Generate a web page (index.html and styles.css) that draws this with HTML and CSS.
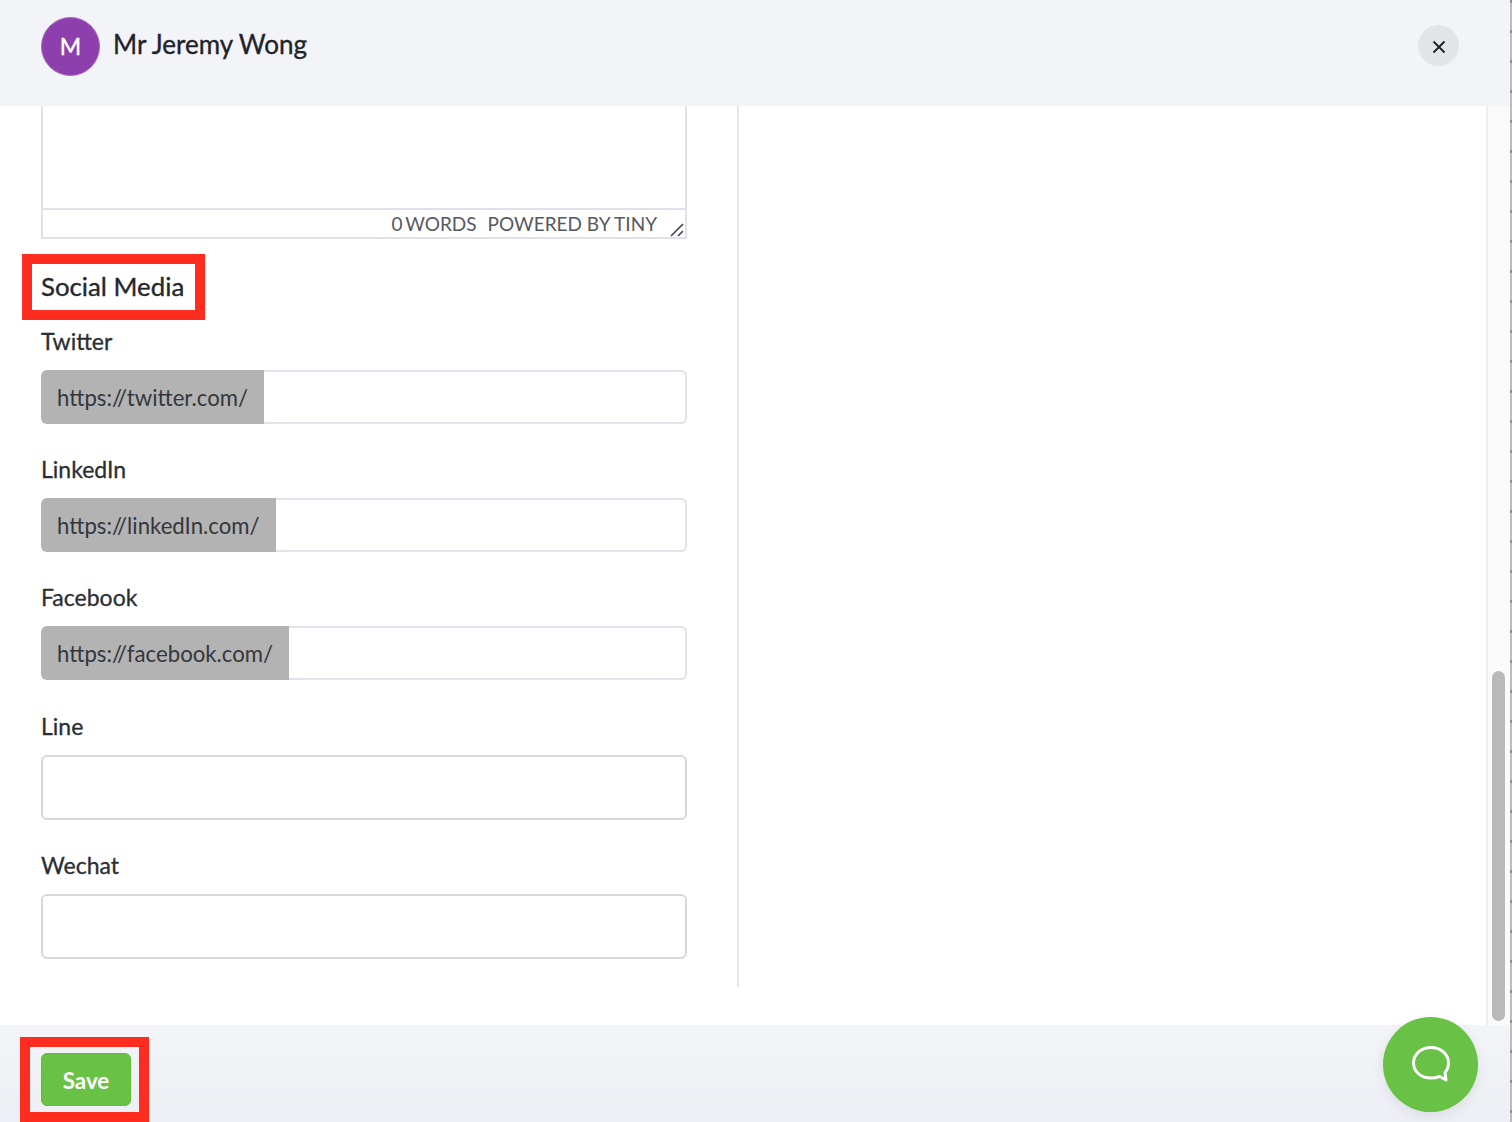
FILE: index.html
```html
<!DOCTYPE html>
<html lang="en">
<head>
<meta charset="utf-8">
<title>Mr Jeremy Wong</title>
<link rel="stylesheet" href="styles.css">
</head>
<body>
<div class="modal">
  <header class="head">
    <div class="who">
      <div class="avatar">M</div>
      <div class="name">Mr Jeremy Wong</div>
    </div>
    <button class="close" aria-label="Close">
      <svg width="14" height="14" viewBox="0 0 14 14"><path d="M1.5 1.5 L12.5 12.5 M12.5 1.5 L1.5 12.5" stroke="#1c1f26" stroke-width="1.8" fill="none"/></svg>
    </button>
  </header>
  <main class="body">
    <div class="col">
      <div class="editor">
        <div class="edit-area"></div>
        <div class="status">
          <span class="words">0 WORDS</span><span class="powered">POWERED BY TINY</span>
          <svg class="grip" width="14" height="14" viewBox="0 0 14 14"><path d="M1 13 L13 1 M8 13 L13 8" stroke="#444" stroke-width="1.6" fill="none"/></svg>
        </div>
      </div>
      <h2 class="section">Social Media</h2>
      <label class="lab first">Twitter</label>
      <div class="group"><span class="prefix">https://twitter.com/</span><input class="ginput"></div>
      <label class="lab">LinkedIn</label>
      <div class="group"><span class="prefix">https://linkedIn.com/</span><input class="ginput"></div>
      <label class="lab">Facebook</label>
      <div class="group"><span class="prefix">https://facebook.com/</span><input class="ginput"></div>
      <label class="lab lab-l">Line</label>
      <input class="plain">
      <label class="lab">Wechat</label>
      <input class="plain">
    </div>
    <div class="scroll"><div class="thumb"></div></div>
  </main>
  <footer class="foot">
    <button class="save">Save</button>
  </footer>
</div>
<div class="chat">
  <svg width="44" height="44" viewBox="0 0 44 44"><path d="M22 4.5 C12.3 4.5 4.5 11.2 4.5 20 C4.5 28.8 12.3 35 22 35 C25 35 28 34.5 30.5 33.3 L37 37 L36 29.5 C38.2 27 39.5 23.8 39.5 20 C39.5 11.2 31.7 4.5 22 4.5 Z" fill="none" stroke="#fff" stroke-width="3" stroke-linejoin="round"/></svg>
</div>
<div class="mark mark-a"></div>
<div class="mark mark-b"></div>
</body>
</html>
```
FILE: styles.css
```css
* { box-sizing: border-box; }
html, body { margin: 0; height: 1122px; overflow: hidden; font-family: Lato, "Liberation Sans", sans-serif; color: #2b2f33; }
body { background: repeating-linear-gradient(#8f8f8f 0, #8f8f8f 3px, #bdbdbd 3px, #bdbdbd 30px); }
.modal { display: flex; flex-direction: column; width: 1510px; height: 1122px; background: #fff; }
.head { height: 106px; flex: none; background: #f2f4f8; display: flex; justify-content: space-between; padding: 17px 51px 0 41px; }
.who { display: flex; align-items: flex-start; gap: 13px; }
.avatar { width: 59px; height: 59px; border-radius: 50%; background: #8e3fae; border: 1px solid #a465c0; color: #fff; font-size: 23px; padding-bottom: 1px; -webkit-text-stroke: 0.4px #fff; display: flex; align-items: center; justify-content: center; }
.name { font-size: 26px; line-height: 30px; margin-top: 12px; color: #1f232a; -webkit-text-stroke: 0.35px #1f232a; }
.close { margin-top: 8px; width: 41px; height: 41px; border-radius: 50%; background: #e3e4e6; border: 0; padding: 2px 0 0; display: flex; align-items: center; justify-content: center; }
.body { flex: 1; min-height: 0; display: flex; justify-content: space-between; }
.col { width: 739px; height: 881px; padding: 0 51px 0 41px; border-right: 2px solid #e4e6ea; }
.editor { width: 646px; height: 133px; border: 2px solid #dfe2ea; border-top: 0; display: flex; flex-direction: column; }
.edit-area { flex: 1; }
.status { height: 29px; border-top: 2px solid #dfe2ea; display: flex; justify-content: flex-end; align-items: center; padding-right: 28px; font-size: 19px; color: #55595e; position: relative; }
.words { word-spacing: -2px; }
.powered { margin-left: 11px; }
.grip { position: absolute; right: 1px; bottom: 0; }
.section { margin: 31px 0 0; font-size: 25.8px; line-height: 32px; font-weight: 400; color: #24282c; -webkit-text-stroke: 0.35px #24282c; }
.lab { display: block; font-size: 23px; line-height: 27px; margin-top: 32px; color: #2b2f33; -webkit-text-stroke: 0.3px #2b2f33; }
.lab.first { margin-top: 26px; }
.lab-l { margin-top: 33px; }
.group { margin-top: 15px; height: 54px; width: 646px; display: flex; }
.prefix { background: #b3b3b3; border-radius: 6px 0 0 6px; padding: 0 16px; font-size: 22.2px; display: flex; align-items: center; color: #33373b; white-space: nowrap; }
.ginput { flex: 1; min-width: 0; border: 2px solid #e0e3ea; border-left: 0; border-radius: 0 6px 6px 0; background: #fff; }
.plain { display: block; margin-top: 15px; width: 646px; height: 65px; border: 2px solid #d6d8dc; border-radius: 6px; background: #fff; }
.scroll { width: 24px; height: 919px; border-left: 2px solid #eceef1; background: #fafafa; padding: 565px 0 0 4px; }
.thumb { width: 13px; height: 350px; border-radius: 7px; background: #b9b9b9; }
.foot { height: 97px; flex: none; background: linear-gradient(#f2f4f8, #eeeff4); padding: 28px 0 0 41px; }
.save { width: 90px; height: 53px; border: 1px solid #5fbd38; border-radius: 6px; background: #69c145; color: #fff; padding: 2px 0 0; font: 700 22.4px Lato, "Liberation Sans", sans-serif; }
.chat { position: absolute; left: 1383px; top: 1017px; width: 95px; height: 95px; border-radius: 50%; background: #69c145; box-shadow: 0 4px 14px rgba(0,0,0,.08); display: flex; align-items: center; justify-content: center; }
.mark { position: absolute; border: 10px solid #ff2d1f; }
.mark-a { left: 22px; top: 254px; width: 183px; height: 66px; }
.mark-b { left: 20px; top: 1037px; width: 129px; height: 85px; }
```
